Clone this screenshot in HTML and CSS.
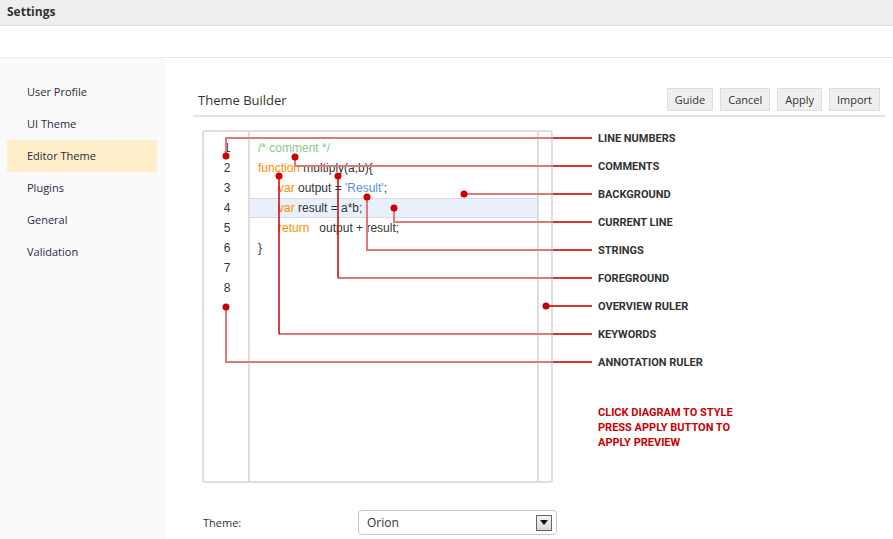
FILE: index.html
```html
<!DOCTYPE html>
<html lang="en">
<head>
<meta charset="utf-8">
<title>Settings</title>
<link rel="stylesheet" href="styles.css">
</head>
<body>
<header class="topbar"><span class="topbar-title">Settings</span></header>
<div class="subbar"></div>
<div class="layout">
  <nav class="sidebar">
    <ul class="nav-list">
      <li class="nav-item">User Profile</li>
      <li class="nav-item">UI Theme</li>
      <li class="nav-item nav-item-active">Editor Theme</li>
      <li class="nav-item">Plugins</li>
      <li class="nav-item">General</li>
      <li class="nav-item">Validation</li>
    </ul>
  </nav>
  <main class="content">
    <div class="section-head">
      <h2 class="section-title">Theme Builder</h2>
      <div class="actions">
        <button class="btn">Guide</button>
        <button class="btn">Cancel</button>
        <button class="btn">Apply</button>
        <button class="btn">Import</button>
      </div>
    </div>
    <div class="diagram">
      <div class="editor">
        <div class="gutter">
          <div class="ln">1</div><div class="ln">2</div><div class="ln">3</div><div class="ln">4</div>
          <div class="ln">5</div><div class="ln">6</div><div class="ln">7</div><div class="ln">8</div>
        </div>
        <div class="code">
          <div class="line"><span class="c-comment">/* comment */</span></div>
          <div class="line"><span class="c-key">function</span> multiply(a,b){</div>
          <div class="line indent"><span class="c-key">var</span> output = <span class="c-str">'Result'</span>;</div>
          <div class="line indent current"><span class="c-key">var</span> result = a*b;</div>
          <div class="line indent"><span class="c-key">return</span>   output + result;</div>
          <div class="line">}</div>
        </div>
        <div class="ruler"></div>
      </div>
      <div class="labels">
        <div class="label">LINE NUMBERS</div>
        <div class="label">COMMENTS</div>
        <div class="label">BACKGROUND</div>
        <div class="label">CURRENT LINE</div>
        <div class="label">STRINGS</div>
        <div class="label">FOREGROUND</div>
        <div class="label">OVERVIEW RULER</div>
        <div class="label">KEYWORDS</div>
        <div class="label">ANNOTATION RULER</div>
        <div class="note">CLICK DIAGRAM TO STYLE<br>PRESS APPLY BUTTON TO<br>APPLY PREVIEW</div>
      </div>
      <svg class="connectors" width="400" height="260" viewBox="0 0 400 260">
        <g class="wire" fill="none" stroke-width="2">
          <polyline points="24,32 24,14 351,14"/>
          <polyline points="93,33 93,42 351,42"/>
          <polyline points="262,70 351,70"/>
          <polyline points="192,84 192,98 351,98"/>
          <polyline points="165,73 165,126 351,126"/>
          <polyline points="136,154 351,154"/>
          <polyline points="77,210 351,210"/>
          <polyline points="24,183 24,238 351,238"/>
        </g>
        <g class="wire-dark" fill="none" stroke-width="1.5">
          <line x1="136" y1="52" x2="136" y2="154"/>
          <line x1="77" y1="52" x2="77" y2="210"/>
        </g>
        <g class="wire-end" fill="none" stroke-width="2">
          <line x1="351" y1="14" x2="390" y2="14"/>
          <line x1="351" y1="42" x2="390" y2="42"/>
          <line x1="351" y1="70" x2="390" y2="70"/>
          <line x1="351" y1="98" x2="390" y2="98"/>
          <line x1="351" y1="126" x2="390" y2="126"/>
          <line x1="351" y1="154" x2="390" y2="154"/>
          <line x1="344" y1="182" x2="390" y2="182"/>
          <line x1="351" y1="210" x2="390" y2="210"/>
          <line x1="351" y1="238" x2="390" y2="238"/>
        </g>
        <g class="dots">
          <circle cx="24" cy="32" r="3.5"/>
          <circle cx="93" cy="33" r="3.5"/>
          <circle cx="262" cy="70" r="3.5"/>
          <circle cx="192" cy="84" r="3.5"/>
          <circle cx="165" cy="73" r="3.5"/>
          <circle cx="136" cy="52" r="3.5"/>
          <circle cx="344" cy="182" r="3.5"/>
          <circle cx="77" cy="52" r="3.5"/>
          <circle cx="24" cy="183" r="3.5"/>
        </g>
      </svg>
    </div>
    <div class="field">
      <span class="field-label">Theme:</span>
      <div class="select">
        <span class="select-value">Orion</span>
        <span class="select-btn"><svg width="8" height="5" viewBox="0 0 8 5"><polygon points="0,0 8,0 4,5" fill="#111"/></svg></span>
      </div>
    </div>
  </main>
</div>
</body>
</html>
```
FILE: styles.css
```css
* { box-sizing: border-box; }
html, body { margin: 0; padding: 0; }
body {
  font-family: "Open Sans", "Liberation Sans", sans-serif;
  font-size: 11px;
  color: #333;
  background: #fff;
  width: 893px;
  height: 539px;
  overflow: hidden;
}
.topbar {
  height: 26px;
  background: #efefef;
  border-bottom: 1px solid #dcdcdc;
  display: flex;
  align-items: center;
  padding-left: 7px;
}
.topbar-title {
  font-weight: 700;
  font-size: 12px;
  color: #333;
  margin-top: -2px;
}
.subbar {
  height: 32px;
  border-bottom: 1px solid #e8e8e8;
}
.layout {
  display: flex;
  height: 481px;
}
.sidebar {
  width: 165px;
  flex: none;
  background: #fafafa;
  padding: 18px 8px 0 7px;
}
.nav-list { list-style: none; margin: 0; padding: 0; }
.nav-item {
  height: 32px;
  line-height: 32px;
  padding-left: 20px;
  color: #2a2a3a;
}
.nav-item-active { background: #feedc9; }
.content {
  flex: 1;
  padding: 0 8px 0 28px;
}
.section-head {
  display: flex;
  align-items: center;
  justify-content: space-between;
  padding: 30px 5px 4px 5px;
  border-bottom: 2px solid #e4e4e4;
}
.section-title {
  margin: 0;
  font-size: 13px;
  font-weight: 400;
  color: #333;
}
.actions { display: flex; gap: 7px; }
.btn {
  font-family: inherit;
  font-size: 11px;
  color: #333;
  height: 23px;
  padding: 0 7px;
  background: #efefef;
  border: 1px solid #dedede;
  border-radius: 0;
}
.diagram {
  position: relative;
  display: flex;
  align-items: flex-start;
  margin: 7px 0 0 9px;
  height: 359px;
}
.editor {
  margin-top: 6px;
  width: 351px;
  height: 353px;
  border: 2px solid #dedede;
  border-radius: 3px;
  display: flex;
  font-family: "Liberation Sans", Arial, sans-serif;
  font-size: 12px;
  color: #333;
}
.gutter {
  width: 46px;
  border-right: 2px solid #dedede;
  padding-top: 6px;
  text-align: center;
}
.ln { height: 20px; line-height: 20px; padding-left: 2px; }
.code {
  flex: 1;
  padding-top: 6px;
}
.line {
  height: 20px;
  line-height: 20px;
  padding-left: 8px;
  white-space: pre;
}
.line.indent { padding-left: 28px; }
.line.current {
  background: #e9f0fb;
  border-top: 1px solid #d6dde8;
  border-bottom: 1px solid #d6dde8;
  line-height: 18px;
}
.c-comment { color: #8fc48f; }
.c-key { color: #ff8c00; }
.c-str { color: #5a8ee6; }
.ruler {
  width: 14px;
  border-left: 2px solid #dedede;
}
.labels {
  margin-left: 45px;
  padding-top: 1px;
  font-family: Roboto, "Liberation Sans", sans-serif;
  font-weight: 700;
  font-size: 11px;
  color: #333;
}
.label {
  height: 28px;
  line-height: 28px;
}
.note {
  margin-top: 28px;
  line-height: 15px;
  color: #cc0000;
}
.connectors {
  position: absolute;
  left: 0;
  top: 0;
  overflow: visible;
  pointer-events: none;
}
.wire { stroke: #e07878; }
.wire-dark { stroke: #cc0000; }
.wire-end { stroke: #d63333; }
.dots { fill: #cc0000; }
.field {
  display: flex;
  align-items: center;
  margin: 27px 0 0 10px;
}
.field-label {
  width: 155px;
  font-size: 11px;
  color: #333;
}
.select {
  width: 199px;
  height: 25px;
  border: 1px solid #c8c8c8;
  border-radius: 4px;
  display: flex;
  align-items: center;
  justify-content: space-between;
  padding: 0 4px 0 8px;
}
.select-value { font-size: 12px; color: #333; }
.select-btn {
  width: 16px;
  height: 16px;
  border: 1px solid #666;
  background: linear-gradient(#f2f2f2, #d8d8d8);
  display: flex;
  align-items: center;
  justify-content: center;
}
```
